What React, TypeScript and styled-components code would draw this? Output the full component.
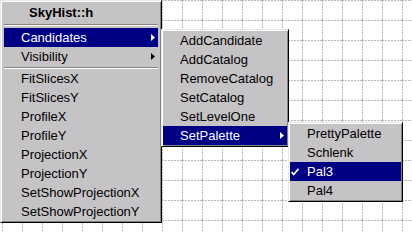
import React from 'react';
import styled, {createGlobalStyle} from "styled-components";

const GlobalStyle = createGlobalStyle`
  html, body {
    margin: 0;
    padding: 0;
    background: #ffffff;
  }
`

type Entry = {
    label: string
    active?: boolean
    checked?: boolean
    sub?: boolean
}

const mainTop: Entry[] = [
    {label: "Candidates", active: true, sub: true},
    {label: "Visibility", sub: true},
]

const mainBottom: Entry[] = [
    {label: "FitSlicesX"},
    {label: "FitSlicesY"},
    {label: "ProfileX"},
    {label: "ProfileY"},
    {label: "ProjectionX"},
    {label: "ProjectionY"},
    {label: "SetShowProjectionX"},
    {label: "SetShowProjectionY"},
]

const candidates: Entry[] = [
    {label: "AddCandidate"},
    {label: "AddCatalog"},
    {label: "RemoveCatalog"},
    {label: "SetCatalog"},
    {label: "SetLevelOne"},
    {label: "SetPalette", active: true, sub: true},
]

const palettes: Entry[] = [
    {label: "PrettyPalette"},
    {label: "Schlenk"},
    {label: "Pal3", active: true, checked: true},
    {label: "Pal4"},
]

const Arrow = ({active}: { active?: boolean }) => (
    <ArrowIcon width="4" height="7" viewBox="0 0 4 7">
        <polygon points="0,0 4,3.5 0,7" fill={active ? "#ffffff" : "#000000"}/>
    </ArrowIcon>
)

const Check = () => (
    <CheckIcon width="8" height="8" viewBox="0 0 8 8">
        <path d="M0.5 4 L2.8 6.5 L7.5 0.8" fill="none" stroke="#ffffff" strokeWidth="1.8"/>
    </CheckIcon>
)

const MenuItem = ({entry, children}: { entry: Entry, children?: React.ReactNode }) => (
    <Item $active={entry.active}>
        {entry.checked && <Check/>}
        <span>{entry.label}</span>
        {entry.sub && <Arrow active={entry.active}/>}
        {children}
    </Item>
)

export default function App() {
    return (
        <>
            <GlobalStyle/>
            <Canvas>
                <Grid width="412" height="232">
                    <defs>
                        <pattern id="grid" width="20" height="20" x="2" y="0" patternUnits="userSpaceOnUse">
                            <line x1="0.5" y1="0" x2="0.5" y2="20" stroke="#b8b8b8" strokeDasharray="2 1"/>
                            <line x1="0" y1="0.5" x2="20" y2="0.5" stroke="#b8b8b8" strokeDasharray="2 1"/>
                        </pattern>
                    </defs>
                    <rect width="412" height="232" fill="url(#grid)"/>
                </Grid>

                <Menu $width={162} $padX={3}>
                    <Title>SkyHist::h</Title>
                    <Separator $before={1} $after={2}/>
                    {mainTop.map(e => (
                        <MenuItem key={e.label} entry={e}>
                            {e.label === "Candidates" && (
                                <SubMenu $width={128} $left={157} $top={1}>
                                    {candidates.map(c => (
                                        <MenuItem key={c.label} entry={c}>
                                            {c.label === "SetPalette" && (
                                                <SubMenu $width={115} $left={125} $top={-4}>
                                                    {palettes.map(p => <MenuItem key={p.label} entry={p}/>)}
                                                </SubMenu>
                                            )}
                                        </MenuItem>
                                    ))}
                                </SubMenu>
                            )}
                        </MenuItem>
                    ))}
                    <Separator $before={1} $after={0}/>
                    {mainBottom.map(e => <MenuItem key={e.label} entry={e}/>)}
                </Menu>
            </Canvas>
        </>
    );
}

const Canvas = styled.div`
  position: relative;
  width: 412px;
  height: 232px;
  overflow: hidden;
  background: #ffffff;
  font-family: "Liberation Sans", Arial, sans-serif;
  font-size: 13px;
`

const Grid = styled.svg`
  position: absolute;
  left: 0;
  top: 0;
  display: block;
`

const Menu = styled.div<{ $width: number, $padX: number }>`
  position: relative;
  box-sizing: border-box;
  width: ${p => p.$width}px;
  padding: 1px ${p => p.$padX}px;
  background: #c6c3c6;
  border: 1px solid;
  border-color: #e8e8e8 #000000 #000000 #e8e8e8;
  box-shadow: inset 1px 1px #ffffff, inset -1px -1px #848284;
`

const SubMenu = styled(Menu).attrs({$padX: 1})<{ $left: number, $top: number }>`
  position: absolute;
  left: ${p => p.$left}px;
  top: ${p => p.$top}px;
  z-index: 2;
`

const Title = styled.div`
  height: 21px;
  line-height: 21px;
  padding-left: 25px;
  font-weight: bold;
  color: #000000;
  white-space: nowrap;
`

const Separator = styled.div<{ $before: number, $after: number }>`
  margin: ${p => p.$before}px 0 ${p => p.$after}px;
  border-top: 1px solid #848284;
  border-bottom: 1px solid #ffffff;
`

const Item = styled.div<{ $active?: boolean }>`
  position: relative;
  display: flex;
  align-items: center;
  justify-content: space-between;
  height: 19px;
  padding: 0 3px 0 17px;
  background: ${p => p.$active ? "#000084" : "transparent"};
  color: ${p => p.$active ? "#ffffff" : "#000000"};
  white-space: nowrap;
`

const ArrowIcon = styled.svg`
  display: block;
  flex: none;
`

const CheckIcon = styled.svg`
  position: absolute;
  left: 1px;
  top: 6px;
`
